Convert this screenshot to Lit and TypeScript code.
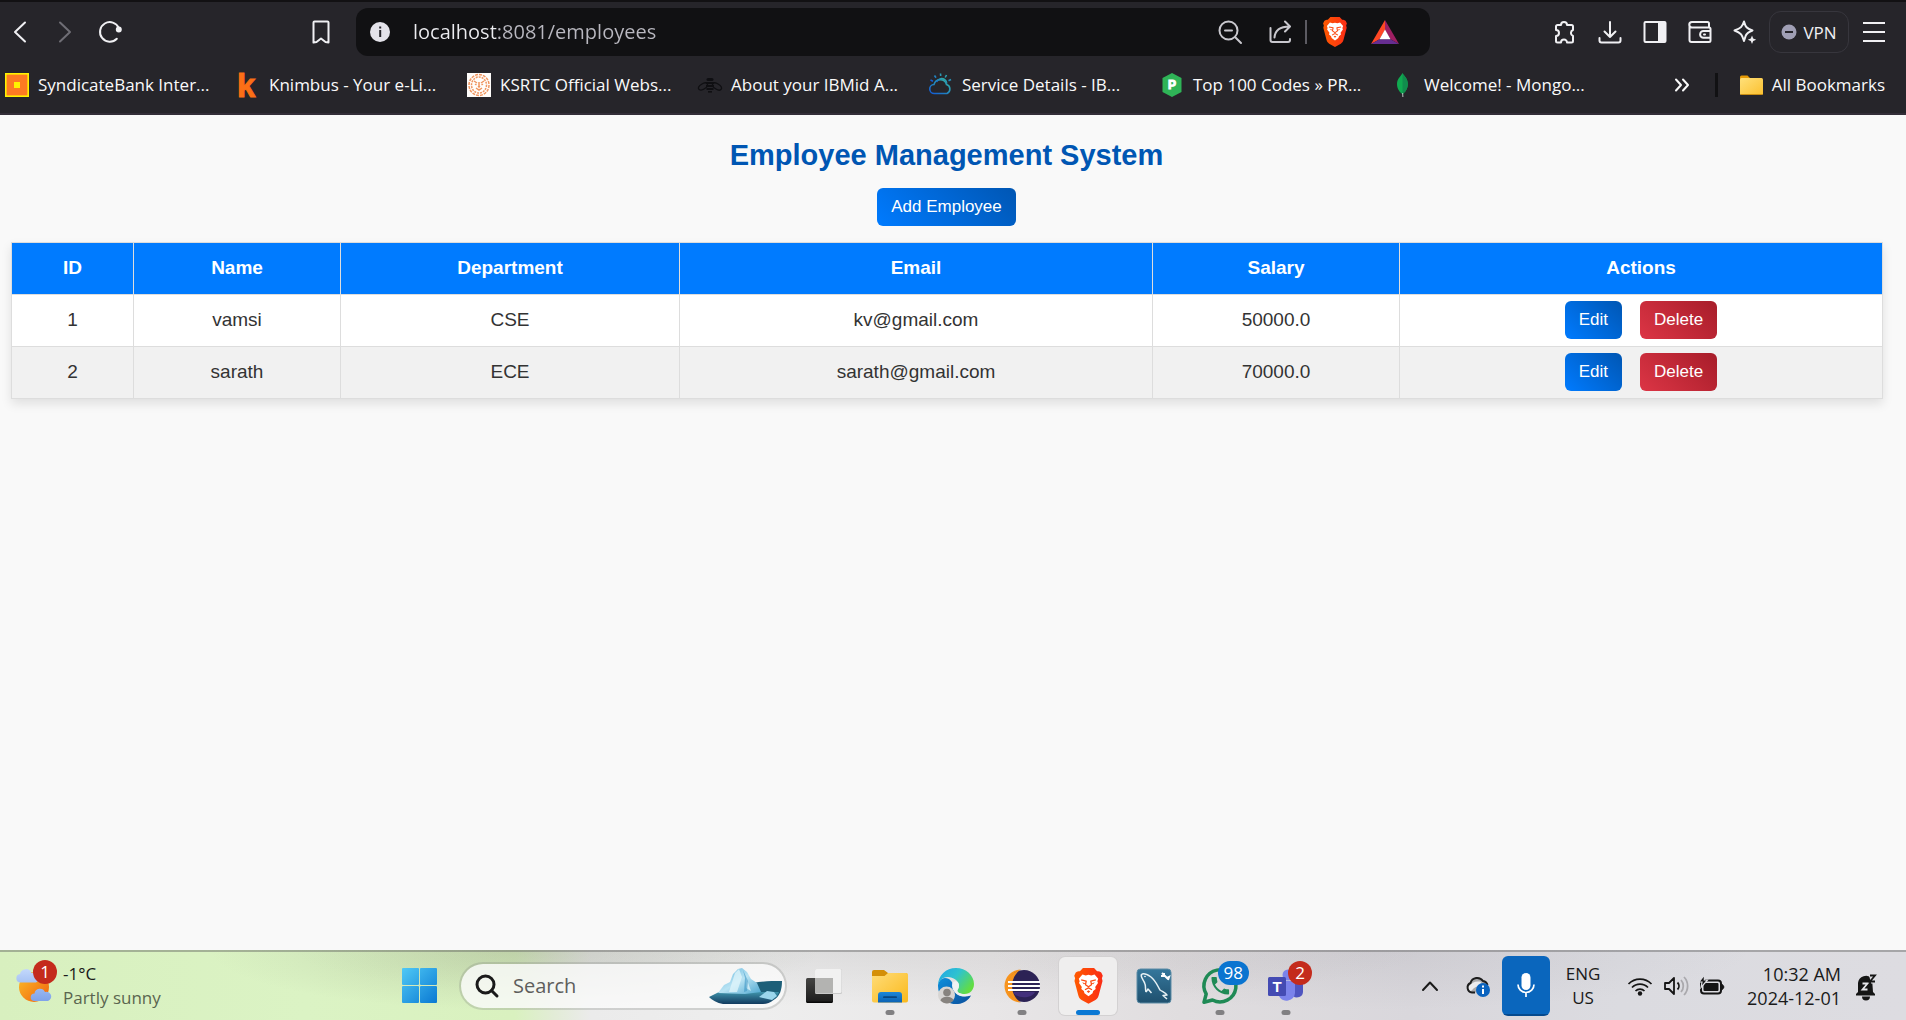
import { LitElement, html, svg, css, TemplateResult } from "lit";
import { customElement, property, state } from "lit/decorators.js";
import { classMap } from "lit/directives/class-map.js";

const uiFont = css`"Open Sans", "Noto Sans", sans-serif`;

const lionFace = svg`
  <path fill="#fff" d="M12 5.4l2.2.5 2.6-.7 2.9 3.3-.7 2 .5 1.4-2.2 3.1.4 1.6-2 1.6-.5 1.8-3.2 2.4-3.2-2.4-.5-1.8-2-1.6.4-1.6-2.2-3.1.5-1.4-.7-2 2.9-3.3 2.6.7z"/>
  <path fill="none" stroke="#fb4b14" stroke-width="1" stroke-linejoin="round" d="M6.2 9.4l4 .9-.6 2.9 2.4 1.7 2.4-1.7-.6-2.9 4-.9M9.2 17.2l2.8-1.5 2.8 1.5"/>
  <path fill="#fb4b14" d="M7 11.3l2.7.9-1.4.6zM17 11.3l-2.7.9 1.4.6zM10.6 18.6l1.4-.9 1.4.9-1.4 1.2z"/>`;

const braveShield = (id: string) => svg`
  <defs><linearGradient id=${id}><stop offset="0" stop-color="#ff5a00"/><stop offset="1" stop-color="#fb2c16"/></linearGradient></defs>
  <path fill="url(#${id})" d="M7.6 0h8.8l2.4 2.6c2-.5 3.4 1.1 3.4 1.1l1.1 2.4-.7 2 .5 2.2-3 11.3c-.5 1.9-1.1 2.7-2.6 3.7L12 28.400l-5.500-3.100c-1.500-1-2.100-1.800-2.600-3.700L.9 10.300l.5-2.200-.7-2 1.100-2.400s1.400-1.600 3.400-1.100z"/>
  ${lionFace}`;

const line = (w: number, h: number, body: TemplateResult, stroke = 2) => html`
  <svg width=${w} height=${h} viewBox="0 0 ${w} ${h}" fill="none" stroke="currentColor" stroke-width=${stroke} stroke-linecap="round" stroke-linejoin="round" aria-hidden="true">${body}</svg>`;

const art = (w: number, h: number, body: TemplateResult, box = `0 0 ${w} ${h}`) => html`
  <svg width=${w} height=${h} viewBox=${box} aria-hidden="true">${body}</svg>`;

const icons = {
  back: line(24, 24, svg`<path d="M17 2.500L7 12l10 9.500"/>`),
  forward: line(24, 24, svg`<path d="M7 2.500L17 12 7 21.500"/>`),
  reload: line(24, 24, svg`<path d="M18.800 18.800A9.800 9.800 0 1 1 20.800 8"/><circle cx="20.800" cy="9.600" r="2" fill="currentColor"/>`),
  bookmark: line(20, 24, svg`<path d="M3.500 1.500h13a1 1 0 0 1 1 1v20l-3-.5-4.500-3.500-4.500 3.500-3 .5v-20a1 1 0 0 1 1-1z"/>`),
  info: art(22, 22, svg`<circle cx="11" cy="11" r="10" fill="#e4e3ea"/><rect x="10.200" y="9" width="2" height="7" fill="#26252b"/><rect x="10.200" y="5.500" width="2" height="2" fill="#26252b"/>`),
  zoomOut: line(24, 24, svg`<circle cx="10.500" cy="10.500" r="9"/><path d="M17.500 17.500l5.500 5.500M7 10.500h7"/>`),
  share: line(24, 24, svg`<path d="M2.500 8v12a2 2 0 0 0 2 2h15.500a2 2 0 0 0 2-2v-1M6.500 17.500c.5-7 5-11 15-11M17 1.500l5 5-5 5"/>`),
  puzzle: line(24, 24, svg`<path d="M3 6.500a1.500 1.500 0 0 1 1.500-1.500h3.500a3 3 0 0 1 6 0h4.500a1.500 1.500 0 0 1 1.500 1.500v3.500a3.200 3.200 0 0 0 0 6v5a1.500 1.500 0 0 1-1.500 1.500h-4.500a3 3 0 0 0-6 0h-3.500a1.500 1.500 0 0 1-1.500-1.500v-5a3 3 0 0 0 0-6z"/>`),
  download: line(24, 24, svg`<path d="M12 2v15M6.500 11.500l5.500 5.500 5.500-5.500M1.500 18v2.500a2 2 0 0 0 2 2h17a2 2 0 0 0 2-2v-2.500"/>`),
  sidebar: line(24, 24, svg`<rect x="1.500" y="2" width="21" height="20" rx="1"/><rect x="15" y="2" width="7" height="20" fill="currentColor" stroke="none"/>`),
  wallet: line(24, 24, svg`<path d="M21 7.500v-4a1.500 1.500 0 0 0-1.500-1.500h-15.500a2.700 2.700 0 0 0 0 5.500h17a1.500 1.500 0 0 1 1.500 1.500v11.500a1.500 1.500 0 0 1-1.500 1.500h-17.500a2 2 0 0 1-2-2v-15M22 11h-6.500a3.400 3.400 0 0 0 0 6.800h6.500M16 14.400h1"/>`),
  leo: line(24, 24, svg`<path d="M11 1.500c1.500 5.500 2.500 6.800 8.500 9-4 1.500-5.500 2.200-6.700 5l-1.800 5.500c-1.800-6-2.800-8-9.500-10.500 6.500-2.500 7.700-3.500 9.500-9z"/><path d="M19 15.500l1.200 3 3 1.200-3 1.200-1.200 3-1.200-3-3-1.200 3-1.200z" fill="currentColor" stroke="none"/>`),
  menu: line(24, 24, svg`<path d="M1 3h22M1 12h22M1 21h22" stroke-linecap="butt"/>`),
  more: line(14, 14, svg`<path d="M1 1.500L6 7l-5 5.500M8 1.500L13 7l-5 5.500"/>`),
  brave: art(26, 30, braveShield("shield-a"), "0 0 24 28.500"),
  bat: art(28, 24, svg`<path fill="#ff4724" d="M14 0L0 24l8.500-4.800L14 10z"/><path fill="#9e1f63" d="M14 0l14 24-8.500-4.800L14 10z"/><path fill="#662d91" d="M0 24h28l-8.500-4.800h-11z"/><path fill="#fff" d="M14 9.500l5.500 9.700h-11z"/>`),
  vpn: art(16, 16, svg`<circle cx="8" cy="8" r="7.500" fill="#a09fb5"/><rect x="4" y="7" width="8" height="2" fill="#26252b"/>`),
  folder: art(24, 24, svg`<defs><linearGradient id="fold" x2="1" y2="1"><stop offset="0" stop-color="#ffe07a"/><stop offset="1" stop-color="#fbc02f"/></linearGradient></defs><path fill="#e69a05" d="M1 4a1.500 1.500 0 0 1 1.500-1.500h6L11 5H22v8H1z"/><rect x="1" y="5" width="23" height="17" rx="1.500" fill="url(#fold)"/><path d="M2 21.500h21" stroke="#c98d12"/>`),
};

const favicons: Record<string, TemplateResult> = {
  bank: art(24, 24, svg`<rect x=".8" y=".8" width="22.400" height="22.400" fill="#fd7a22" stroke="#fff200" stroke-width="1.600"/><rect x="9" y="9" width="6" height="6" fill="#fff200"/>`),
  knimbus: art(24, 24, svg`<text x="1" y="24" font-family="Liberation Sans" font-weight="700" font-size="33" fill="#fb6f16" stroke="#fb6f16">k</text>`),
  ksrtc: art(24, 24, svg`<rect width="24" height="24" fill="#fffdfb"/><g fill="none" stroke="#ef955f" stroke-width="1.500"><ellipse cx="12" cy="12" rx="10" ry="10.500" stroke-dasharray="3 1"/><ellipse cx="12" cy="12" rx="7.500" ry="8" stroke-dasharray="2 1"/><path d="M7 8l3 2M17 8l-3 2M12 9v5M9 15l3 2 3-2M8 11l1.500 1M16 11l-1.500 1"/></g><path fill="#ef955f" d="M10.500 13h3L12 15.500z"/>`),
  bee: art(24, 24, svg`<g fill="none" stroke="#0f0f12" stroke-width="1.300"><ellipse cx="5" cy="13.500" rx="5" ry="2.700" transform="rotate(-32 5 13.500)"/><ellipse cx="19" cy="13.500" rx="5" ry="2.700" transform="rotate(32 19 13.500)"/></g><g fill="#0f0f12"><rect x="8.500" y="5" width="7" height="3" rx="1.500"/><rect x="8" y="9" width="8" height="2"/><rect x="8" y="12" width="8" height="2"/><rect x="8.500" y="15" width="7" height="2"/><rect x="10" y="18" width="4" height="1.600"/></g>`),
  cloud: art(24, 24, svg`<defs><linearGradient id="sky" x1="0" y1="1" x2="1" y2="0"><stop offset="0" stop-color="#1259d8"/><stop offset="1" stop-color="#35b9a0"/></linearGradient></defs><g fill="none" stroke="url(#sky)" stroke-width="1.600"><path d="M5.500 20.500a4.500 4.500 0 0 1-.5-9 6.500 6.500 0 0 1 12.500 0 4.800 4.800 0 0 1 .5 9z"/><path d="M7.500 9a5.500 5.500 0 0 1 8-2.500 5.500 5.500 0 0 1 2.300 4"/><path d="M11.500 .500l.2 2.500M5.500 2.500l1.500 2.300M17.500 2l-1.300 2.500M22 6.500l-2.500 1.300M1.500 7l2.500 1.200"/></g>`),
  prep: art(24, 24, svg`<path fill="#2fb457" d="M12 0l9.500 5v14L12 24l-9.500-5V5z"/><text x="8" y="16" font-family="Liberation Sans" font-weight="700" font-size="12" fill="#fff" stroke="#fff">P</text>`),
  leaf: art(24, 24, svg`<path fill="#10aa50" d="M11.500 0c1 2.500 5.300 5 5.300 11 0 5.500-3.300 8.500-4.800 10h-1C9.500 19.500 6 16.500 6 11 6 5.500 10.500 2.500 11.500 0z"/><path fill="#118d4d" d="M11.500 0c1 2.500 5.300 5 5.300 11 0 5.500-3.300 8.500-4.800 10h-.5z"/><path fill="#b8c4c2" d="M11.100 20h1l.3 4h-1z"/>`),
};

const apps: Record<string, TemplateResult> = {
  start: art(36, 36, svg`<defs><linearGradient id="win" x2="1" y2="1" gradientUnits="objectBoundingBox"><stop offset="0" stop-color="#4fc9f6"/><stop offset="1" stop-color="#0a79d3"/></linearGradient><mask id="panes"><g fill="#fff"><rect width="17" height="17" rx="1"/><rect x="18" width="17" height="17" rx="1"/><rect y="18" width="17" height="17" rx="1"/><rect x="18" y="18" width="17" height="17" rx="1"/></g></mask></defs><rect width="35" height="35" fill="url(#win)" mask="url(#panes)"/>`),
  taskview: art(36, 36, svg`<defs><linearGradient id="tv" x2="0" y2="1"><stop offset="0" stop-color="#454543"/><stop offset="1" stop-color="#1b1b1b"/></linearGradient></defs><rect y="10" width="27" height="25" rx="1.500" fill="url(#tv)"/><path d="M1 34.200h25" stroke="#000"/><rect x="9" y="1" width="27" height="25" rx="1.500" fill="#c9c9c9"/><rect x="9" y="1" width="26.500" height="24" rx="1.500" fill="#f1f1f1"/><path d="M9 10h18v15H9z" fill="#b3b3b1"/>`),
  explorer: art(36, 36, svg`<defs><linearGradient id="ex" x2="1" y2="1"><stop offset="0" stop-color="#ffdc78"/><stop offset="1" stop-color="#fab91c"/></linearGradient><linearGradient id="ex2" x2="0" y2="1"><stop offset="0" stop-color="#1d87d8"/><stop offset="1" stop-color="#0b62b4"/></linearGradient></defs><path fill="#d48f08" d="M0 4a2 2 0 0 1 2-2h10l4 3h19v8H0z"/><path fill="url(#ex)" d="M0 8h12.500L16 5h18.500A1.500 1.500 0 0 1 36 6.500v26a2 2 0 0 1-2 2H2a2 2 0 0 1-2-2z"/><path fill="url(#ex2)" d="M6 34.500V27a3 3 0 0 1 3-3h18a3 3 0 0 1 3 3v7.500z"/><rect x="11" y="28.300" width="14" height="1.700" rx="1" fill="#08467f"/>`),
  edge: art(36, 36, svg`<defs><linearGradient id="e1" x2="1" y2=".6"><stop offset="0" stop-color="#1fa4e8"/><stop offset=".5" stop-color="#2fc3cf"/><stop offset="1" stop-color="#62dd42"/></linearGradient><linearGradient id="e2" x2="1" y2="1"><stop offset="0" stop-color="#0d8fdc"/><stop offset="1" stop-color="#0b4f9c"/></linearGradient></defs><path fill="url(#e2)" d="M0 18a18 18 0 0 0 20 18c6-.5 10.500-4 13-8.500-9 3-17-.5-17.500-8C15 14 12 10 7 10 3 10 0 14 0 18z"/><path fill="url(#e1)" d="M0 18C0 7 8 0 18 0s18 7.500 18 16c0 6-4 10-9.500 10-4 0-7.500-1.300-7.500-3.200 0-1 2-2 2-5C21 12.500 15 9 10 9 4 9 .5 13 0 18z"/><path fill="#f0f2f3" d="M21 17.500c0-2-1-4.300-3-4.300a4 4 0 0 0-4 4c0 6.500 6 11 12 11 4 0 7.500-1.500 7.500-2.500-2 .7-5 .8-7 .5-5-.5-7-2-7-3.500 0-1 1.500-2.500 1.500-5.200z"/><circle cx="8.500" cy="27" r="8.500" fill="#d7d5d3"/><circle cx="9" cy="24.500" r="3.800" fill="#87837f"/><path fill="#87837f" d="M2.500 32.500c1-5 12-5 13 0-3.500 4-9.500 4-13 0z"/>`),
  eclipse: art(36, 36, svg`<path fill="#f7941e" d="M17 1.500A16.500 16.500 0 0 0 17 34.500 18 18 0 0 1 17 1.500z"/><circle cx="20" cy="18" r="16" fill="#2c2255"/><path fill="#f7941e" d="M16 2A16.500 16.500 0 0 0 16 34 20 20 0 0 1 16 2z"/><path fill="#43307c" d="M9 24h22c-3 7-19 7-22 0z"/><g fill="#fff"><rect x="4" y="13" width="32" height="2"/><rect x="4" y="17" width="32" height="2"/><rect x="4" y="21" width="32" height="2"/></g>`),
  brave: art(31, 36, braveShield("shield-b"), "0 0 24 28.500"),
  workbench: art(36, 36, svg`<defs><linearGradient id="wb" x2="0" y2="1"><stop offset="0" stop-color="#35779c"/><stop offset="1" stop-color="#1f506e"/></linearGradient></defs><rect x="1" y="1" width="34" height="34" rx="3.500" fill="url(#wb)" stroke="#5c8ca6"/><g fill="none" stroke="#e7f1f5" stroke-width="1.500" stroke-linejoin="round"><path d="M10 24c-1-3 0-5-1-8C8 12 4 9 5.500 6.500 8 4.500 12 7 15 9c5 4 6.500 9 9 13 3 2 6 3 7 5l-4 .5 4 3.500"/><path d="M10 24l2-3 3.500 4"/></g><circle cx="9" cy="8.500" r=".8" fill="#fff"/><path d="M26 5l2 2 3 3 2-1-1 3M25 8l3 0 0-3" stroke="#fff" stroke-width="2" fill="none"/>`),
  whatsapp: art(36, 36, svg`<path fill="none" stroke="#1f8a55" stroke-width="3.500" stroke-linejoin="round" d="M2 34.300l2.200-8.300A16 16 0 1 1 10.500 32z"/><path fill="#1f8a55" transform="translate(6.500 6) scale(.98)" d="M6.620 10.790c1.440 2.830 3.760 5.140 6.590 6.590l2.200-2.200c.27-.27.67-.36 1.020-.24 1.120.37 2.330.57 3.570.57.55 0 1 .45 1 1V20c0 .55-.45 1-1 1-9.390 0-17-7.610-17-17 0-.55.45-1 1-1h3.500c.55 0 1 .45 1 1 0 1.250.2 2.450.57 3.570.11.35.03.74-.25 1.020l-2.200 2.200z"/>`),
  teams: art(36, 36, svg`<circle cx="31" cy="10" r="4" fill="#5059c9"/><path fill="#4f55c0" d="M25 13h10v11a6 6 0 0 1-10 4z"/><circle cx="20" cy="7" r="5.500" fill="#7b83eb"/><path fill="#7b83eb" d="M11 13h16v12a8.500 8.500 0 0 1-16 3z"/><rect y="9" width="18" height="19" rx="1.500" fill="#444bb3"/><text x="9" y="23.500" text-anchor="middle" font-family="Liberation Sans" font-weight="700" font-size="15" fill="#fff">T</text>`),
};

const tray = {
  up: line(18, 12, svg`<path d="M2 10l7-7.500L16 10"/>`),
  cloud: art(26, 24, svg`<path fill="#a9a9ab" d="M7 18.500a5 5 0 0 1-1.500-9.500 7 7 0 0 1 12.500-2 5.500 5.500 0 0 1 4.500 6l-4 5z"/><path d="M5 14.500c3-3.500 6-5 9-4.500" stroke="#ececee" stroke-width="5" stroke-linecap="round" fill="none"/><path fill="none" stroke="#1d1d1d" stroke-width="2" d="M10 18.500H7a5 5 0 0 1-1.500-9.500 7 7 0 0 1 12.500-2 5.500 5.500 0 0 1 4.500 4"/><circle cx="18" cy="16" r="7" fill="#0a63bf"/><rect x="17" y="15" width="2" height="5" fill="#fff"/><rect x="17" y="11.500" width="2" height="2" fill="#fff"/>`),
  mic: art(20, 28, svg`<rect x="5.500" y="1" width="9" height="17" rx="4.500" fill="#fff"/><path d="M2 12.500a8 8 0 0 0 16 0M10 20.500v4.500" stroke="#fff" stroke-width="1.700" fill="none"/>`),
  wifi: art(26, 20, svg`<g fill="none" stroke="#151515" stroke-width="1.700"><path d="M1.500 8a16 16 0 0 1 23 0M5 11.500a11 11 0 0 1 16 0M8.500 15a6.300 6.300 0 0 1 9 0"/></g><circle cx="13" cy="17.500" r="2.200" fill="#151515"/>`),
  volume: art(26, 22, svg`<g fill="none" stroke-width="1.800" stroke-linejoin="round"><path stroke="#151515" d="M2 8h4l5-5v16l-5-5H2zM14.500 7.500a5 5 0 0 1 0 7"/><path stroke="#aaa9ad" d="M18 5a9 9 0 0 1 0 12M21 2a13 13 0 0 1 0 18"/></g>`),
  battery: art(26, 22, svg`<rect x="2" y="5.500" width="20" height="13" rx="3" fill="none" stroke="#151515" stroke-width="2"/><rect x="4.500" y="8" width="15" height="8" rx="1" fill="#151515"/><path d="M23.500 9.500l1.500 2.500-1.500 2.500z" fill="#151515" stroke="#151515"/><path fill="#151515" stroke="#dcdce1" stroke-width="1.200" d="M5.500 0L0 7h3L2 12.500 8.500 5H5.300z"/>`),
  bell: art(22, 26, svg`<path fill="#151515" d="M3 19v-9a8 8 0 0 1 14-4.500l1 13.500 2 2v1.500H1V21zM7 23.500h8a4 4 0 0 1-8 0z"/><path d="M7.500 10.500h5l-5 6h5" fill="none" stroke="#e6e6ea" stroke-width="1.800"/><path d="M14 2.500h6.500v7H16" fill="#dcdce1" stroke="#dcdce1" stroke-width="2"/><path d="M15 2.500h5l-5 6h5" fill="none" stroke="#151515" stroke-width="1.800"/>`),
};

const reset = css`
  :host { display: block; font-family: ${uiFont}; }
  * { box-sizing: border-box; }
  button, input { font: inherit; color: inherit; border: 0; background: none; padding: 0; margin: 0; outline: 0; }
  a { color: inherit; text-decoration: none; }
  svg { display: block; flex: none; overflow: visible; }
`;

@customElement("browser-chrome")
class BrowserChrome extends LitElement {
  static styles = [reset, css`
    :host { background: #26252a; color: #f0f0f3; border-top: 2px solid #121113; border-bottom: 2px solid #332e38; padding-bottom: 5px; }
    .row { display: flex; align-items: center; }
    .toolbar { height: 60px; }
    .icon { width: 40px; height: 40px; display: grid; place-items: center; flex: none; }
    .nav { display: flex; gap: 5px; width: 356px; padding-right: 15px; flex: none; }
    .dim { color: #6f6e75; }
    .push { margin-left: auto; }
    .address { flex: 1; min-width: 0; height: 48px; padding: 0 25px 0 4px; display: flex; align-items: center; gap: 10px; border-radius: 12px; background: #111113; color: #c9c8ce; }
    .url { flex: 1; min-width: 0; font-size: 20px; line-height: 28px; padding-left: 3px; color: transparent; background: linear-gradient(90deg, #ececf0 88px, #b9b8c0 88px); -webkit-background-clip: text; background-clip: text; }
    .rule { width: 2px; height: 24px; margin: 0 -2px 0 -5px; background: #5c5b62; }
    .tools { flex: none; width: 476px; display: flex; align-items: center; justify-content: flex-end; padding-right: 7px; }
    .tool { width: 45px; }
    .vpn { display: flex; align-items: center; justify-content: center; gap: 6px; width: 80px; height: 50px; margin-left: 2px; border: 1px solid #37363d; border-radius: 12px; font-size: 17px; height: 42px; }
    .menu { width: 50px; }
    .bookmarks { height: 46px; padding: 0 21px 0 5px; font-size: 17px; line-height: 24px; color: #fafafa; }
    .mark { display: flex; align-items: center; gap: 9px; width: 231px; white-space: nowrap; }
    .split { width: 3px; height: 24px; background: #111113; margin: 0 21px 0 13px; }
    .all { display: flex; align-items: center; gap: 9px; white-space: nowrap; }
  `];

  private marks = [
    ["bank", "SyndicateBank Inter..."],
    ["knimbus", "Knimbus - Your e-Li..."],
    ["ksrtc", "KSRTC Official Webs..."],
    ["bee", "About your IBMid A..."],
    ["cloud", "Service Details - IB..."],
    ["prep", "Top 100 Codes » PR..."],
    ["leaf", "Welcome! - Mongo..."],
  ];

  render() {
    return html`
      <header class="row toolbar">
        <nav class="nav">
          <button class="icon" aria-label="Back">${icons.back}</button>
          <button class="icon dim" aria-label="Forward">${icons.forward}</button>
          <button class="icon" aria-label="Reload">${icons.reload}</button>
          <button class="icon push" aria-label="Bookmark this page">${icons.bookmark}</button>
        </nav>
        <div class="address">
          <button class="icon" aria-label="Site information">${icons.info}</button>
          <input class="url" type="text" aria-label="Address" value="localhost:8081/employees" />
          <button class="icon" aria-label="Zoom">${icons.zoomOut}</button>
          <button class="icon" aria-label="Share">${icons.share}</button>
          <span class="rule"></span>
          <button class="icon" aria-label="Shields">${icons.brave}</button>
          <button class="icon" aria-label="Rewards">${icons.bat}</button>
        </div>
        <div class="tools">
          <button class="icon tool" aria-label="Extensions">${icons.puzzle}</button>
          <button class="icon tool" aria-label="Downloads">${icons.download}</button>
          <button class="icon tool" aria-label="Sidebar">${icons.sidebar}</button>
          <button class="icon tool" aria-label="Wallet">${icons.wallet}</button>
          <button class="icon tool" aria-label="Assistant">${icons.leo}</button>
          <button class="vpn">${icons.vpn}VPN</button>
          <button class="icon menu" aria-label="Menu">${icons.menu}</button>
        </div>
      </header>
      <nav class="row bookmarks" aria-label="Bookmarks">
        ${this.marks.map(([icon, label]) => html`<a class="mark" href="#">${favicons[icon]}<span>${label}</span></a>`)}
        <button class="icon push" aria-label="More bookmarks">${icons.more}</button>
        <span class="split"></span>
        <a class="all" href="#">${icons.folder}<span>All Bookmarks</span></a>
      </nav>`;
  }
}

interface Employee { id: number; name: string; department: string; email: string; salary: string; }

@customElement("employee-page")
class EmployeePage extends LitElement {
  static styles = [reset, css`
    :host { flex: 1; background: #f9f9f9; color: #333; padding: 20px 24px 20px 11px; text-align: center; font-family: "Liberation Sans", Arial, sans-serif; }
    h1 { margin: 0 0 13px; font-size: 29px; line-height: 40px; color: #0056b3; }
    .btn { height: 38px; padding: 0 14px; border-radius: 6px; font-size: 17px; line-height: 38px; color: #fff; background: linear-gradient(45deg, #007bff, #0056b3); }
    .danger { background: linear-gradient(45deg, #dc3545, #a71d2a); }
    .add { display: block; margin: 0 auto 16px; }
    table { width: 100%; table-layout: fixed; border-collapse: collapse; background: #fff; font-size: 19px; line-height: 24px; box-shadow: 0 5px 10px rgba(0, 0, 0, 0.1); }
    th, td { height: 52px; padding: 0 0 2px; border: 1px solid #ddd; }
    th { background: #007bff; color: #fff; }
    tbody tr:nth-child(even) { background: #f1f1f1; }
    .c-id { width: 122px; }
    .c-name { width: 207px; }
    .c-dept { width: 339px; }
    .c-email { width: 473px; }
    .c-salary { width: 247px; }
    .c-actions { width: 483px; }
    .actions { display: flex; justify-content: center; gap: 18px; }
  `];

  @state() private employees: Employee[] = [
    { id: 1, name: "vamsi", department: "CSE", email: "kv@gmail.com", salary: "50000.0" },
    { id: 2, name: "sarath", department: "ECE", email: "sarath@gmail.com", salary: "70000.0" },
  ];

  render() {
    return html`
      <h1>Employee Management System</h1>
      <button class="btn add">Add Employee</button>
      <table>
        <thead>
          <tr>
            <th class="c-id">ID</th><th class="c-name">Name</th><th class="c-dept">Department</th>
            <th class="c-email">Email</th><th class="c-salary">Salary</th><th class="c-actions">Actions</th>
          </tr>
        </thead>
        <tbody>
          ${this.employees.map((e) => html`
            <tr>
              <td>${e.id}</td><td>${e.name}</td><td>${e.department}</td><td>${e.email}</td><td>${e.salary}</td>
              <td><div class="actions"><button class="btn">Edit</button><button class="btn danger">Delete</button></div></td>
            </tr>`)}
        </tbody>
      </table>`;
  }
}

@customElement("task-button")
class TaskButton extends LitElement {
  @property() app = "";
  @property() label = "";
  @property() badge = "";
  @property() tone = "";
  @property({ type: Boolean }) running = false;
  @property({ type: Boolean }) active = false;

  static styles = [reset, css`
    .task { position: relative; display: grid; place-items: center; width: 58px; height: 58px; margin: 0 4px; border-radius: 6px; }
    .active { background: #efeeee; box-shadow: 0 0 0 1px #d3d1d2; }
    .dot { position: absolute; left: 50%; bottom: 0; width: 9px; height: 5px; border-radius: 3px; background: #818082; transform: translateX(-50%); }
    .active .dot { width: 24px; background: #0a78d4; }
    .badge { position: absolute; top: 4px; right: 0; min-width: 24px; height: 24px; padding: 0 6px; border-radius: 12px; font-size: 17px; line-height: 24px; text-align: center; color: #fff; background: #0a74d0; }
    .red { background: #c42b1c; right: 3px; }
  `];

  render() {
    return html`<button class=${classMap({ task: true, active: this.active })} aria-label=${this.label}>
      ${apps[this.app]}
      ${this.badge ? html`<span class=${classMap({ badge: true, red: this.tone === "red" })}>${this.badge}</span>` : ""}
      ${this.running ? html`<span class="dot"></span>` : ""}
    </button>`;
  }
}

@customElement("task-bar")
class TaskBar extends LitElement {
  static styles = [reset, css`
    .bar { display: flex; align-items: center; height: 70px; border-top: 2px solid rgba(90, 90, 90, 0.42); color: #1a1a1a; font-size: 17px; line-height: 24px;
      background: radial-gradient(ellipse 16% 60px at 27% 0, rgba(140, 150, 125, 0.3), rgba(140, 150, 125, 0)),
        radial-gradient(ellipse 30% 56px at 45% 0, rgba(120, 120, 120, 0.13), rgba(120, 120, 120, 0)),
        radial-gradient(ellipse 20% 60px at 72% 0, rgba(120, 120, 130, 0.12), rgba(120, 120, 130, 0)),
        linear-gradient(90deg, #d8f0bf 0%, #dbf3c4 16%, #d9f1bf 27%, #e2ecd6 29%, #ebebeb 31%, #eeeeee 40%, #e8e6e7 52%, #e0dddf 62%, #d9d7dc 74%, #dbdbe0 85%, #dddce1 100%); background-origin: border-box; }
    .weather { position: relative; display: flex; gap: 11px; width: 387px; flex: none; padding-left: 16px; text-align: left; align-items: center; }
    .sub { color: #5a654f; }
    .alert { position: absolute; left: 33px; top: -2px; width: 24px; height: 24px; border-radius: 12px; background: #c42b1c; color: #fff; line-height: 24px; text-align: center; }
    .block { display: block; }
    .search { display: flex; align-items: center; flex: 0 1 328px; min-width: 0; height: 48px; margin: 0 4px 0 6px; padding: 0 3px 0 15px; gap: 15px; border: 2px solid rgba(120, 125, 118, 0.25); border-radius: 24px; background: rgba(250, 250, 250, 0.82); background-clip: padding-box; }
    .query { flex: 1; min-width: 0; font-size: 20px; line-height: 28px; }
    .query::placeholder { color: #5e5e5c; opacity: 1; }
    .tray { margin-left: auto; display: flex; align-items: center; padding-right: 20px; }
    .cell { display: grid; place-items: center; width: 48px; height: 60px; }
    .mic { background: linear-gradient(#0a66bd 96%, #064a8e 96%); border-radius: 6px; }
    .lang { width: 66px; text-align: center; }
    .status { display: grid; grid-template-columns: repeat(3, 36px); place-items: center; margin-left: 6px; height: 48px; }
    .clock { min-width: 111px; text-align: right; margin-right: 5px; font-size: 18px; }
    .bell { width: 40px; }
  `];

  render() {
    return html`<footer class="bar">
      <button class="weather">
        ${art(36, 36, svg`<defs><linearGradient id="sun" x2="1" y2="1"><stop offset="0" stop-color="#fcc02a"/><stop offset="1" stop-color="#f0600c"/></linearGradient><linearGradient id="puff" x2="0" y2="1"><stop offset="0" stop-color="#c3d8fb"/><stop offset="1" stop-color="#7fa3ea"/></linearGradient></defs>
          <circle cx="18" cy="19" r="15" fill="url(#sun)"/>
          <path fill="url(#puff)" d="M4 14.500a4.300 4.300 0 0 1 0-8.500 6 6 0 0 1 11.500-1A5 5 0 0 1 20 14.500zM18.500 33a3.800 3.800 0 0 1 0-7.600 5.500 5.500 0 0 1 10.500-1.400 4.600 4.600 0 0 1 3 9z"/>`)}
        <span><span class="block">-1°C</span><span class="block sub">Partly sunny</span></span>
        <span class="alert">1</span>
      </button>
      <task-button app="start" label="Start"></task-button>
      <label class="search">
        ${line(22, 22, svg`<circle cx="9.500" cy="9.500" r="8.500"/><path d="M15.500 15.500l5.500 5.500"/>`, 3)}
        <input class="query" type="text" placeholder="Search" aria-label="Search" />
        ${art(73, 36, svg`<defs><linearGradient id="sea" x2="0" y2="1"><stop offset="0" stop-color="#3f93ab"/><stop offset="1" stop-color="#123a5e"/></linearGradient><linearGradient id="ice" x2="1" y2="1"><stop offset="0" stop-color="#5cb3dc"/><stop offset=".5" stop-color="#b9e3f3"/><stop offset="1" stop-color="#4ca6cf"/></linearGradient></defs>
          <path fill="#1d5f78" d="M44 15c10-2 18-2 29-2 0 8-2 16-9 19l-18-6z"/>
          <path fill="url(#sea)" d="M0 29l10-5h60c-2 6-8 12-16 12H14C8 35 3 32 0 29z"/>
          <path fill="url(#ice)" d="M9 25l6-8 6-3 3-8 5-5 4-1 5 4 4 7 6 4 4 9-16 2z"/>
          <path fill="#e2f5fb" opacity=".75" d="M26 5l4-4 3 8-5 15h-8zM37 9l5 14-5-3z"/>
          <path fill="#3d96c4" d="M34 2l2 8-1 14 3-1 1-10z" opacity=".6"/>
          <path fill="#9bd6ec" d="M50 29l8-6 7 1 3 4-5 4z"/>`)}
      </label>
      <task-button app="taskview" label="Task view"></task-button>
      <task-button app="explorer" label="File Explorer" running></task-button>
      <task-button app="edge" label="Edge"></task-button>
      <task-button app="eclipse" label="Eclipse" running></task-button>
      <task-button app="brave" label="Brave" running active></task-button>
      <task-button app="workbench" label="Workbench"></task-button>
      <task-button app="whatsapp" label="WhatsApp" badge="98" running></task-button>
      <task-button app="teams" label="Teams" badge="2" tone="red" running></task-button>
      <div class="tray">
        <button class="cell" aria-label="Show hidden icons">${tray.up}</button>
        <button class="cell" aria-label="OneDrive">${tray.cloud}</button>
        <button class="cell mic" aria-label="Microphone">${tray.mic}</button>
        <button class="lang"><span class="block">ENG</span><span class="block">US</span></button>
        <button class="status" aria-label="Network, volume and battery">${tray.wifi}${tray.volume}${tray.battery}</button>
        <button class="clock"><span class="block">10:32 AM</span><span class="block">2024-12-01</span></button>
        <button class="cell bell" aria-label="Notifications">${tray.bell}</button>
      </div>
    </footer>`;
  }
}

@customElement("app-root")
class AppRoot extends LitElement {
  static styles = css`
    :host { display: flex; flex-direction: column; min-height: 100vh; }
  `;

  render() {
    return html`<browser-chrome></browser-chrome><employee-page></employee-page><task-bar></task-bar>`;
  }
}
